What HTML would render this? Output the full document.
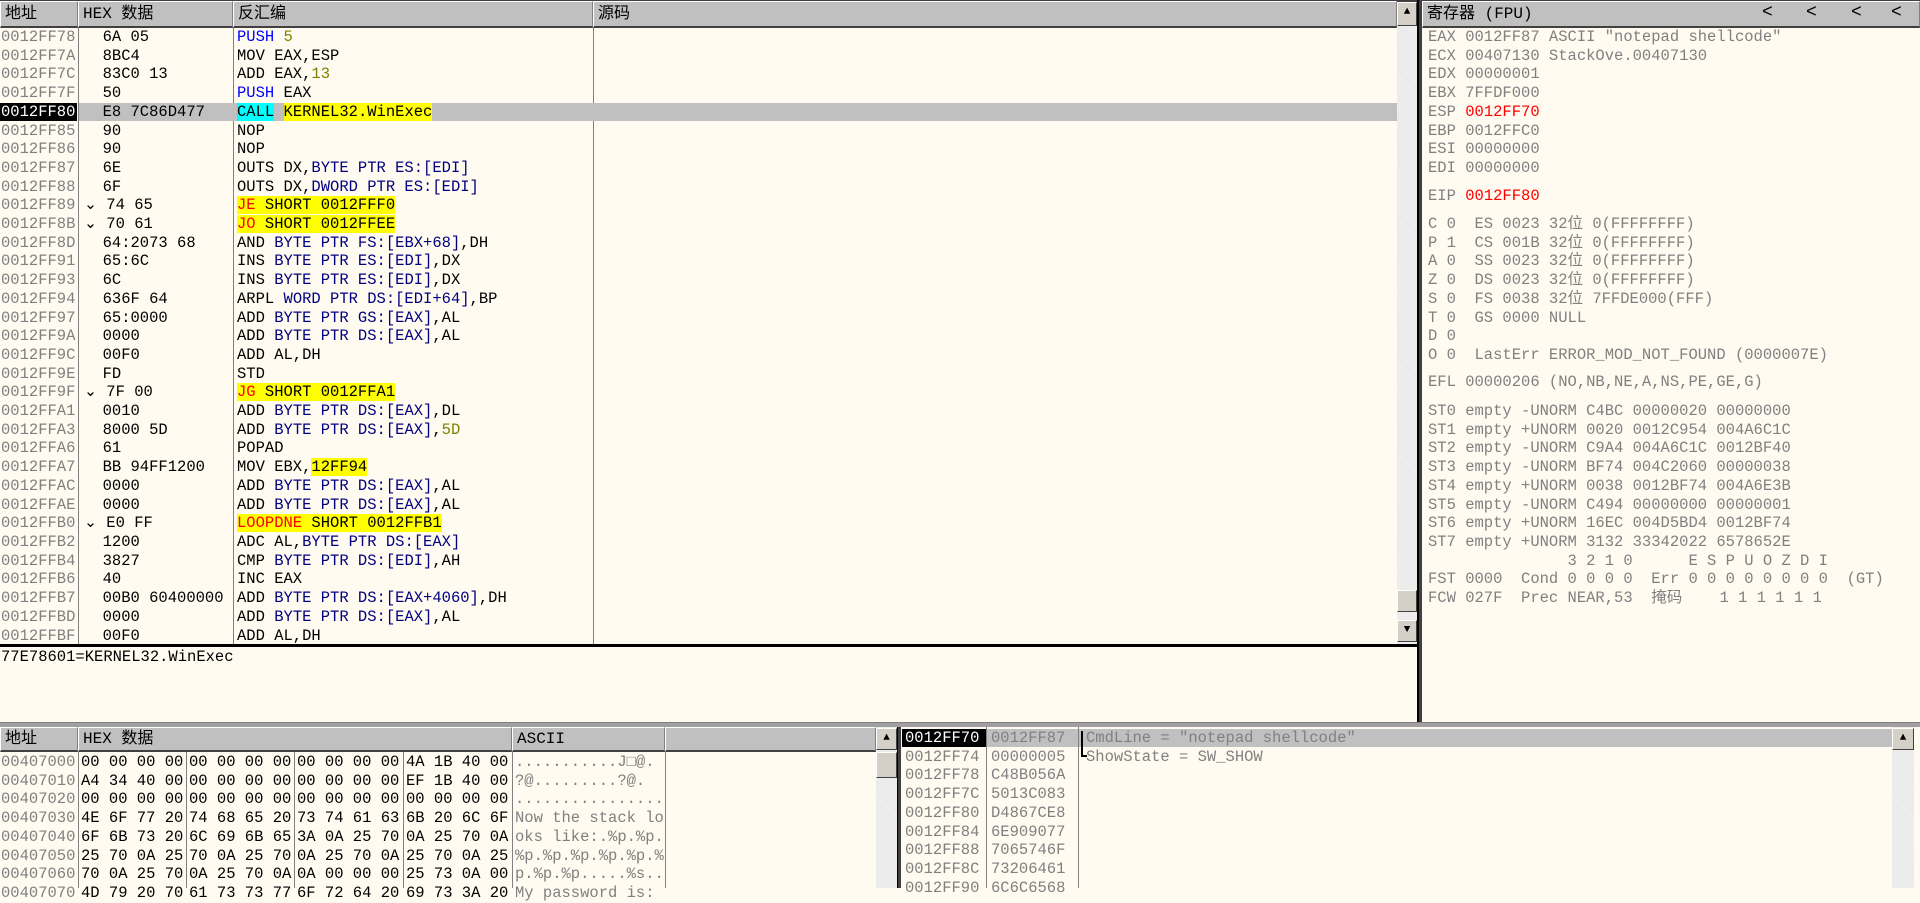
<!DOCTYPE html>
<html><head><meta charset="utf-8">
<style>
*{margin:0;padding:0;box-sizing:border-box}
body{width:1920px;height:888px;overflow:hidden;background:#fffbf0;position:relative;font-family:"Liberation Mono","Noto Sans CJK SC",monospace;font-size:15.5px;color:#000}
.a{position:absolute}
.t{position:absolute;white-space:pre;line-height:18.7px}
.hd{position:absolute;background:#c0c0c0;border-top:1px solid #fff;border-bottom:2px solid #404040;height:27px;line-height:25px;white-space:pre;padding-left:4px;font-size:16px;border-right:1px solid #808080;border-left:1px solid #fff}
.vl{position:absolute;width:1px;background:#808080}
.g{color:#808080}
.b{color:#0000ff}
.n{color:#000080}
.o{color:#808000}
.r{color:#ff0000}
.y{background:#ffff00}
.cy{background:#00ffff}
.ry{color:#ff0000;background:#ffff00}
.sb{position:absolute;background:repeating-linear-gradient(45deg,#e4e4e4 0 1px,#f4f4f4 1px 2px)}
.btn{position:absolute;background:#d4d0c8;border:1px solid;border-color:#fff #404040 #404040 #fff;font-size:11px;text-align:center;line-height:18px}
</style></head><body>
<div class="a" style="left:0;top:0;width:1920px;height:2px;background:#404040"></div>
<div class="hd" style="left:0;top:1px;width:78px">地址</div>
<div class="hd" style="left:78px;top:1px;width:155px">HEX 数据</div>
<div class="hd" style="left:233px;top:1px;width:360px">反汇编</div>
<div class="hd" style="left:593px;top:1px;width:804px">源码</div>
<div class="vl" style="left:78px;top:28px;height:617px"></div>
<div class="vl" style="left:233px;top:28px;height:617px"></div>
<div class="vl" style="left:593px;top:28px;height:617px"></div>
<div class="a" style="left:79px;top:103px;width:1318px;height:18px;background:#c0c0c0"></div>
<div class="a" style="left:0;top:103px;width:77px;height:18px;background:#000"></div>
<div class="t g" style="left:1px;top:28px">0012FF78
0012FF7A
0012FF7C
0012FF7F
<span style="color:#fff">0012FF80</span>
0012FF85
0012FF86
0012FF87
0012FF88
0012FF89
0012FF8B
0012FF8D
0012FF91
0012FF93
0012FF94
0012FF97
0012FF9A
0012FF9C
0012FF9E
0012FF9F
0012FFA1
0012FFA3
0012FFA6
0012FFA7
0012FFAC
0012FFAE
0012FFB0
0012FFB2
0012FFB4
0012FFB6
0012FFB7
0012FFBD
0012FFBF</div>
<div class="t" style="left:84px;top:28px">  6A 05
  8BC4
  83C0 13
  50
  E8 7C86D477
  90
  90
  6E
  6F
⌄ 74 65
⌄ 70 61
  64:2073 68
  65:6C
  6C
  636F 64
  65:0000
  0000
  00F0
  FD
⌄ 7F 00
  0010
  8000 5D
  61
  BB 94FF1200
  0000
  0000
⌄ E0 FF
  1200
  3827
  40
  00B0 60400000
  0000
  00F0</div>
<div class="t" style="left:237px;top:28px"><span class="b">PUSH</span> <span class="o">5</span>
MOV EAX,ESP
ADD EAX,<span class="o">13</span>
<span class="b">PUSH</span> EAX
<span class="cy">CALL</span> <span class="y">KERNEL32.WinExec</span>
NOP
NOP
OUTS DX,<span class="n">BYTE PTR ES:[EDI]</span>
OUTS DX,<span class="n">DWORD PTR ES:[EDI]</span>
<span class="ry">JE</span><span class="y"> SHORT 0012FFF0</span>
<span class="ry">JO</span><span class="y"> SHORT 0012FFEE</span>
AND <span class="n">BYTE PTR FS:[EBX+68]</span>,DH
INS <span class="n">BYTE PTR ES:[EDI]</span>,DX
INS <span class="n">BYTE PTR ES:[EDI]</span>,DX
ARPL <span class="n">WORD PTR DS:[EDI+64]</span>,BP
ADD <span class="n">BYTE PTR GS:[EAX]</span>,AL
ADD <span class="n">BYTE PTR DS:[EAX]</span>,AL
ADD AL,DH
STD
<span class="ry">JG</span><span class="y"> SHORT 0012FFA1</span>
ADD <span class="n">BYTE PTR DS:[EAX]</span>,DL
ADD <span class="n">BYTE PTR DS:[EAX]</span>,<span class="o">5D</span>
POPAD
MOV EBX,<span class="y">12FF94</span>
ADD <span class="n">BYTE PTR DS:[EAX]</span>,AL
ADD <span class="n">BYTE PTR DS:[EAX]</span>,AL
<span class="ry">LOOPDNE</span><span class="y"> SHORT 0012FFB1</span>
ADC AL,<span class="n">BYTE PTR DS:[EAX]</span>
CMP <span class="n">BYTE PTR DS:[EDI]</span>,AH
INC EAX
ADD <span class="n">BYTE PTR DS:[EAX+4060]</span>,DH
ADD <span class="n">BYTE PTR DS:[EAX]</span>,AL
ADD AL,DH</div>
<div class="sb" style="left:1397px;top:2px;width:20px;height:642px"></div>
<div class="btn" style="left:1397px;top:2px;width:20px;height:24px">▲</div>
<div class="btn" style="left:1397px;top:590px;width:20px;height:22px"></div>
<div class="btn" style="left:1397px;top:620px;width:20px;height:22px">▼</div>
<div class="a" style="left:0;top:644px;width:1420px;height:3px;background:#000"></div>
<div class="a" style="left:1417px;top:0;width:5px;height:722px;background:#404040;border-left:2px solid #000"></div>
<div class="t" style="left:1px;top:648px">77E78601=KERNEL32.WinExec</div>
<div class="hd" style="left:1422px;top:1px;width:498px">寄存器 (FPU)</div>
<div class="t" style="left:1762px;top:4px;font-size:18px">&lt;</div>
<div class="t" style="left:1806px;top:4px;font-size:18px">&lt;</div>
<div class="t" style="left:1851px;top:4px;font-size:18px">&lt;</div>
<div class="t" style="left:1891px;top:4px;font-size:18px">&lt;</div>
<div class="t g" style="left:1428px;top:28px">EAX 0012FF87 ASCII "notepad shellcode"
ECX 00407130 StackOve.00407130
EDX 00000001
EBX 7FFDF000
ESP <span class="r">0012FF70</span>
EBP 0012FFC0
ESI 00000000
EDI 00000000</div>
<div class="t g" style="left:1428px;top:187px">EIP <span class="r">0012FF80</span></div>
<div class="t g" style="left:1428px;top:215px">C 0  ES 0023 32位 0(FFFFFFFF)
P 1  CS 001B 32位 0(FFFFFFFF)
A 0  SS 0023 32位 0(FFFFFFFF)
Z 0  DS 0023 32位 0(FFFFFFFF)
S 0  FS 0038 32位 7FFDE000(FFF)
T 0  GS 0000 NULL
D 0
O 0  LastErr ERROR_MOD_NOT_FOUND (0000007E)</div>
<div class="t g" style="left:1428px;top:373px">EFL 00000206 (NO,NB,NE,A,NS,PE,GE,G)</div>
<div class="t g" style="left:1428px;top:402px">ST0 empty -UNORM C4BC 00000020 00000000
ST1 empty +UNORM 0020 0012C954 004A6C1C
ST2 empty -UNORM C9A4 004A6C1C 0012BF40
ST3 empty -UNORM BF74 004C2060 00000038
ST4 empty +UNORM 0038 0012BF74 004A6E3B
ST5 empty -UNORM C494 00000000 00000001
ST6 empty +UNORM 16EC 004D5BD4 0012BF74
ST7 empty +UNORM 3132 33342022 6578652E
               3 2 1 0      E S P U O Z D I
FST 0000  Cond 0 0 0 0  Err 0 0 0 0 0 0 0 0  (GT)
FCW 027F  Prec NEAR,53  掩码    1 1 1 1 1 1</div>
<div class="a" style="left:0;top:722px;width:1920px;height:5px;background:#a0a0a0;border-top:1px solid #808080"></div>
<div class="hd" style="left:0;top:727px;width:78px;height:25px;line-height:23px">地址</div>
<div class="hd" style="left:78px;top:727px;width:434px;height:25px;line-height:23px">HEX 数据</div>
<div class="hd" style="left:512px;top:727px;width:153px;height:25px;line-height:23px">ASCII</div>
<div class="hd" style="left:665px;top:727px;width:211px;height:25px;line-height:23px"></div>
<div class="vl" style="left:78px;top:752px;height:136px"></div>
<div class="vl" style="left:186px;top:752px;height:136px"></div>
<div class="vl" style="left:294px;top:752px;height:136px"></div>
<div class="vl" style="left:403px;top:752px;height:136px"></div>
<div class="vl" style="left:512px;top:752px;height:136px"></div>
<div class="vl" style="left:665px;top:752px;height:136px"></div>
<div class="t g" style="left:1px;top:753px">00407000
00407010
00407020
00407030
00407040
00407050
00407060
00407070</div>
<div class="t" style="left:81px;top:753px">00 00 00 00
A4 34 40 00
00 00 00 00
4E 6F 77 20
6F 6B 73 20
25 70 0A 25
70 0A 25 70
4D 79 20 70</div>
<div class="t" style="left:189px;top:753px">00 00 00 00
00 00 00 00
00 00 00 00
74 68 65 20
6C 69 6B 65
70 0A 25 70
0A 25 70 0A
61 73 73 77</div>
<div class="t" style="left:297px;top:753px">00 00 00 00
00 00 00 00
00 00 00 00
73 74 61 63
3A 0A 25 70
0A 25 70 0A
0A 00 00 00
6F 72 64 20</div>
<div class="t" style="left:406px;top:753px">4A 1B 40 00
EF 1B 40 00
00 00 00 00
6B 20 6C 6F
0A 25 70 0A
25 70 0A 25
25 73 0A 00
69 73 3A 20</div>
<div class="t g" style="left:515px;top:753px">...........J□@.
?@.........?@.
................
Now the stack lo
oks like:.%p.%p.
%p.%p.%p.%p.%p.%
p.%p.%p.....%s..
My password is: </div>
<div class="sb" style="left:876px;top:727px;width:21px;height:161px"></div>
<div class="btn" style="left:876px;top:728px;width:21px;height:22px">▲</div>
<div class="btn" style="left:876px;top:752px;width:21px;height:26px"></div>
<div class="a" style="left:897px;top:727px;width:4px;height:161px;background:#404040;border-left:1px solid #000"></div>
<div class="a" style="left:987px;top:729px;width:905px;height:18px;background:#c0c0c0"></div>
<div class="a" style="left:902px;top:729px;width:84px;height:18px;background:#000"></div>
<div class="vl" style="left:986px;top:727px;height:161px"></div>
<div class="vl" style="left:1078px;top:727px;height:161px"></div>
<div class="t g" style="left:905px;top:729px"><span style="color:#fff">0012FF70</span>
0012FF74
0012FF78
0012FF7C
0012FF80
0012FF84
0012FF88
0012FF8C
0012FF90</div>
<div class="t g" style="left:991px;top:729px">0012FF87
00000005
C48B056A
5013C083
D4867CE8
6E909077
7065746F
73206461
6C6C6568</div>
<div class="a" style="left:1081px;top:731px;width:2px;height:26px;background:#000"></div>
<div class="a" style="left:1081px;top:755px;width:6px;height:2px;background:#000"></div>
<div class="t g" style="left:1086px;top:729px">CmdLine = "notepad shellcode"
ShowState = SW_SHOW</div>
<div class="sb" style="left:1892px;top:727px;width:22px;height:161px"></div>
<div class="btn" style="left:1892px;top:728px;width:22px;height:22px">▲</div>
</body></html>
